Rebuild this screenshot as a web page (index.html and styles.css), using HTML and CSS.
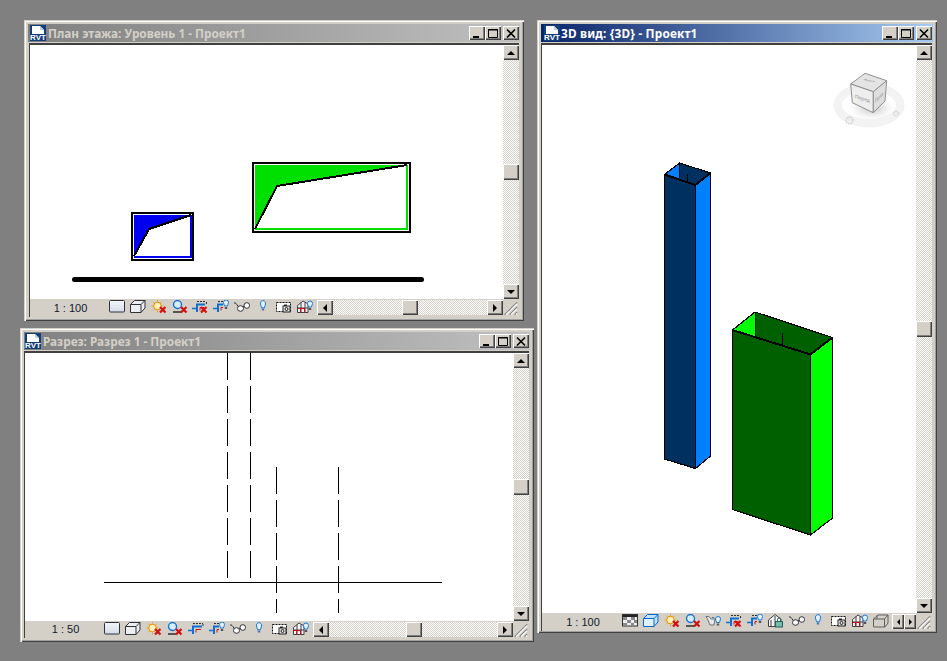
FILE: index.html
```html
<!DOCTYPE html>
<html lang="ru">
<head>
<meta charset="utf-8">
<title>Revit</title>
<link rel="stylesheet" href="styles.css">
</head>
<body>
<svg class="defs" width="0" height="0" aria-hidden="true">
  <defs>
    <linearGradient id="grad-rect" x1="0" y1="0" x2="0" y2="1"><stop offset="0" stop-color="#f4f6fb"/><stop offset="1" stop-color="#d5dce8"/></linearGradient>
    <radialGradient id="grad-shadow"><stop offset="0" stop-color="#bcbcbc"/><stop offset="1" stop-color="#f0f0f0" stop-opacity="0"/></radialGradient>
    <symbol id="rvt" viewBox="0 0 16 16">
      <rect width="16" height="16" fill="#123f7c"/>
      <path d="M2 1h8l4 4v4H2z" fill="#fff"/>
      <path d="M10 1l4 4h-4z" fill="#bcd0e8"/>
      <text x="8" y="15.400" class="rvt-text">RVT</text>
    </symbol>
    <symbol id="g-min" viewBox="0 0 16 13"><rect x="4" y="9" width="6" height="2" fill="#000"/></symbol>
    <symbol id="g-max" viewBox="0 0 16 13"><path d="M3.500 2.500h9v8h-9zM3 3h10" fill="none" stroke="#000"/></symbol>
    <symbol id="g-close" viewBox="0 0 16 13"><path d="M4 2.500l8 8M12 2.500l-8 8" stroke="#000" stroke-width="1.600" fill="none"/></symbol>
    <symbol id="grip" viewBox="0 0 12 13">
      <path d="M1 12L11 2M5 12l6-6M9 12l2-2" stroke="#808080" stroke-width="1.200" fill="none"/>
      <path d="M2 12L11 3M6 12l5-5M10 12l1-1" stroke="#fff" fill="none"/>
    </symbol>
    <symbol id="x-mark" viewBox="0 0 16 14"><path d="M9 7l5.500 5.500M14.500 7L9 12.500" stroke="#d01010" stroke-width="2.200" fill="none"/></symbol>
    <symbol id="bulb" viewBox="0 0 16 14"><path d="M5.500 4a2.600 2.600 0 1 1 5 0c0 1.600-.9 2.200-1.100 3.800H6.600C6.400 6.200 5.500 5.600 5.500 4z" fill="#e6f2ff" stroke="#1878d8"/><rect x="6.800" y="8.500" width="2.400" height="2" fill="#4a78a8"/></symbol>
    <symbol id="i-rect" viewBox="0 0 16 14"><rect x=".5" y=".5" width="15" height="11.500" rx="1" fill="url(#grad-rect)" stroke="#303038"/></symbol>
    <symbol id="i-check" viewBox="0 0 16 14">
      <rect x=".5" y=".5" width="15" height="11.500" fill="#eee" stroke="#303038"/>
      <rect x="1" y="1" width="14" height="2" fill="#222"/>
      <path d="M1 3h4v3H1zM9 3h4v3H9zM5 6h4v3H5zM12 6h3v3h-3zM1 9h4v3H1zM9 9h3v3H9z" fill="#8a8a8a"/>
    </symbol>
    <symbol id="i-cube" viewBox="0 0 16 14"><path d="M.5 4.500L4.500.5h10.500v7.500L11 12.500H.5zM.5 4.500H11v8M11 4.500L15 .5" fill="#eceef2" stroke="#303038"/></symbol>
    <symbol id="i-cube-blue" viewBox="0 0 16 14"><path d="M.5 4.500L4.500.5h10.500v7.500L11 12.500H.5z" fill="#bfe2ff" stroke="#0a66c8"/><path d="M1 5h10v7H1z" fill="#dff1ff"/><path d="M.5 4.500H11v8M11 4.500L15 .5" fill="none" stroke="#0a66c8"/></symbol>
    <symbol id="i-sun" viewBox="0 0 16 14">
      <circle cx="6.500" cy="6" r="3.800" fill="#fff3b8" stroke="#e88a00"/>
      <path d="M6.500 0v1.500M6.500 10.500V12.500M.5 6h1.500M11 6h1.500M2.200 1.700l1.100 1.100M10.800 1.700L9.700 2.800M2.200 10.300l1.100-1.100" stroke="#e8a020" fill="none"/>
      <use href="#x-mark" width="16" height="14"/>
    </symbol>
    <symbol id="i-lens" viewBox="0 0 16 14">
      <circle cx="5.500" cy="4.500" r="4" fill="#d8ecff" stroke="#1070d0" stroke-width="1.300"/>
      <rect x="1" y="11" width="8" height="2" fill="#555"/>
      <use href="#x-mark" width="16" height="14"/>
    </symbol>
    <symbol id="i-crop" viewBox="0 0 16 14">
      <path d="M5 12V4.500H13" stroke="#1070d0" stroke-width="2" fill="none"/>
      <path d="M0 8.500h4" stroke="#1070d0" stroke-width="1.500" fill="none"/>
      <path d="M5 1.500h9M14.500 2v3" stroke="#303038" stroke-dasharray="2 1" fill="none"/>
      <path d="M8 7.500h4M8 7.500v3" stroke="#d01010" fill="none"/>
      <use href="#x-mark" width="16" height="14"/>
    </symbol>
    <symbol id="i-crop2" viewBox="0 0 16 14">
      <path d="M5 12V4.500H10" stroke="#1070d0" stroke-width="2" fill="none"/>
      <path d="M0 8.500h4" stroke="#1070d0" stroke-width="1.500" fill="none"/>
      <path d="M5 1.500h5" stroke="#303038" stroke-dasharray="2 1" fill="none"/>
      <path d="M8 7.500h2M8 7.500v3" stroke="#d01010" fill="none"/>
      <path d="M10.500 2.500a2.500 2.500 0 1 1 5 0c0 1.500-.9 2-1.100 3.500h-2.800c-.2-1.500-1.100-2-1.100-3.500z" fill="#e6f2ff" stroke="#1878d8"/>
      <rect x="11.800" y="7" width="2.400" height="2" fill="#555"/>
    </symbol>
    <symbol id="i-crop3" viewBox="0 0 16 14">
      <path d="M5 12V4.500H14" stroke="#1070d0" stroke-width="2" fill="none"/>
      <path d="M0 8.500h4" stroke="#1070d0" stroke-width="1.500" fill="none"/>
      <path d="M5 1.500h10M15 2v3" stroke="#303038" stroke-dasharray="2 1" fill="none"/>
      <path d="M8 7.500h5M8 7.500v3" stroke="#d01010" fill="none"/>
    </symbol>
    <symbol id="i-glasses" viewBox="0 0 16 14">
      <ellipse cx="6.500" cy="8.500" rx="3" ry="2.800" fill="#fff" stroke="#303038"/>
      <ellipse cx="12.800" cy="5.500" rx="2.800" ry="2.800" fill="#fff" stroke="#303038"/>
      <path d="M0 3c1.500-.5 2.500.5 4 3.500M9 7l1.500-.8" fill="none" stroke="#303038"/>
    </symbol>
    <symbol id="i-camera" viewBox="0 0 16 14">
      <path d="M.5 2.500h14v9H.5z" fill="#fff" stroke="#111" stroke-dasharray="2 1"/>
      <rect x="7" y="6" width="7" height="6" fill="#e8e8e8" stroke="#222"/>
      <circle cx="10.500" cy="9" r="1.500" fill="none" stroke="#222"/>
      <rect x="8" y="4.500" width="3" height="1.500" fill="#222"/>
    </symbol>
    <symbol id="i-house" viewBox="0 0 16 14">
      <path d="M.5 5.500L6 1l5 3v8.500H.5z" fill="#f4f4f4" stroke="#404048"/>
      <path d="M4 2.500v10M8 2.500v10M.5 8h10.500" stroke="#404048" fill="none"/>
      <path d="M.5 8.500h7M3.500 8v4.500M7.500 8v4.500" stroke="#d01010" fill="none"/>
      <path d="M10.500 3.500a2.500 2.500 0 1 1 5 0c0 1.500-.9 2-1.100 3.500h-2.800c-.2-1.500-1.100-2-1.100-3.500z" fill="#e6f2ff" stroke="#1878d8"/>
      <rect x="11.800" y="8" width="2.400" height="2" fill="#555"/>
    </symbol>
    <symbol id="i-pot" viewBox="0 0 16 14">
      <path d="M1 2.500h3L6 5h4l-1 6H5C4 9 3 5 1 2.500zM7 3.500h2" fill="#e8e8ea" stroke="#707078"/>
      <path d="M10.500 5a2.500 2.500 0 1 1 5 0c0 1.500-.9 2-1.100 3.500h-2.800c-.2-1.500-1.100-2-1.100-3.500z" fill="#e6f2ff" stroke="#1878d8"/>
      <rect x="11.800" y="9.500" width="2.400" height="2" fill="#555"/>
    </symbol>
    <symbol id="i-lock" viewBox="0 0 16 14">
      <path d="M.5 6L7 .5 13 5v7.500H.5z" fill="#f4f4f4" stroke="#404048"/>
      <path d="M3 6v6.500M7 2v10" stroke="#404048" fill="none"/>
      <rect x="7.500" y="7.500" width="7" height="5.500" fill="#7bb8b0" stroke="#206860"/>
      <path d="M9.500 7.500v-2a1.500 1.500 0 0 1 3 0v2" fill="none" stroke="#206860"/>
    </symbol>
    <symbol id="i-box" viewBox="0 0 16 14"><path d="M.5 5L5 1h10v8l-3 4H.5zM.5 5H11.500v8M11.500 5L15 1M4 5V1.500" fill="#d4d0c8" stroke="#606060"/></symbol>
  </defs>
</svg>

<main class="desktop">

  <section class="window win-plan">
    <header class="titlebar">
      <svg class="app-icon"><use href="#rvt"/></svg>
      <h1 class="title">План этажа: Уровень 1 - Проект1</h1>
      <div class="caption-buttons">
        <button class="cap"><svg><use href="#g-min"/></svg></button><button class="cap"><svg><use href="#g-max"/></svg></button><button class="cap cap-close"><svg><use href="#g-close"/></svg></button>
      </div>
    </header>
    <div class="client">
      <div class="main-row">
        <svg class="canvas" viewBox="30 45 473 254" width="473" height="254">
          <rect x="253" y="163" width="156.500" height="68.500" class="outline"/>
          <path d="M255 165H407L277 186 255 229z" fill="#00e000" class="pix"/>
          <path d="M255 229H406.500V165" fill="none" stroke="#00e000" stroke-width="2" class="pix"/>
          <path d="M255 229L277 186 407 165" class="edge"/>
          <rect x="132" y="213" width="61" height="46.500" class="outline"/>
          <path d="M134 215H191L149 229 134 256z" fill="#0000f0" class="pix"/>
          <path d="M134 256.800H190.500V215" fill="none" stroke="#0000f0" stroke-width="2" class="pix"/>
          <path d="M134 256L149 229 191 215" class="edge"/>
          <path d="M74.500 279.500H421.500" stroke="#000" stroke-width="5" stroke-linecap="round"/>
        </svg>
        <div class="vscroll">
          <button class="sb"><i class="arr up"></i></button>
          <div class="track track-v thumb-plan"><span class="thumb"></span></div>
          <button class="sb"><i class="arr down"></i></button>
        </div>
      </div>
      <div class="status">
        <span class="scale">1 : 100</span>
        <div class="tools">
          <svg class="ti"><use href="#i-rect"/></svg>
          <svg class="ti"><use href="#i-cube"/></svg>
          <svg class="ti"><use href="#i-sun"/></svg>
          <svg class="ti"><use href="#i-lens"/></svg>
          <svg class="ti nudge"><use href="#i-crop"/></svg>
          <svg class="ti"><use href="#i-crop2"/></svg>
          <svg class="ti"><use href="#i-glasses"/></svg>
          <svg class="ti"><use href="#bulb"/></svg>
          <svg class="ti"><use href="#i-camera"/></svg>
          <svg class="ti"><use href="#i-house"/></svg>
        </div>
        <div class="hscroll">
          <button class="sb sb-h"><i class="arr left"></i></button>
          <div class="track track-h thumb-h-plan"><span class="thumb"></span></div>
          <button class="sb sb-h"><i class="arr right"></i></button>
        </div>
        <svg class="grip"><use href="#grip"/></svg>
      </div>
    </div>
  </section>

  <section class="window win-section">
    <header class="titlebar">
      <svg class="app-icon"><use href="#rvt"/></svg>
      <h1 class="title">Разрез: Разрез 1 - Проект1</h1>
      <div class="caption-buttons">
        <button class="cap"><svg><use href="#g-min"/></svg></button><button class="cap"><svg><use href="#g-max"/></svg></button><button class="cap cap-close"><svg><use href="#g-close"/></svg></button>
      </div>
    </header>
    <div class="client">
      <div class="main-row">
        <svg class="canvas" viewBox="25 353 488 268" width="488" height="268">
          <path d="M104 582.500H442" class="thin"/>
          <path d="M227.500 353V582M250.500 353V582" class="dashed"/>
          <path d="M276.500 467V613M338.500 467V613" class="dashed"/>
        </svg>
        <div class="vscroll">
          <button class="sb"><i class="arr up"></i></button>
          <div class="track track-v thumb-section"><span class="thumb"></span></div>
          <button class="sb"><i class="arr down"></i></button>
        </div>
      </div>
      <div class="status">
        <span class="scale">1 : 50</span>
        <div class="tools">
          <svg class="ti"><use href="#i-rect"/></svg>
          <svg class="ti"><use href="#i-cube"/></svg>
          <svg class="ti"><use href="#i-sun"/></svg>
          <svg class="ti"><use href="#i-lens"/></svg>
          <svg class="ti"><use href="#i-crop3"/></svg>
          <svg class="ti"><use href="#i-crop2"/></svg>
          <svg class="ti"><use href="#i-glasses"/></svg>
          <svg class="ti"><use href="#bulb"/></svg>
          <svg class="ti"><use href="#i-camera"/></svg>
          <svg class="ti"><use href="#i-house"/></svg>
        </div>
        <div class="hscroll">
          <button class="sb sb-h"><i class="arr left"></i></button>
          <div class="track track-h thumb-h-section"><span class="thumb"></span></div>
          <button class="sb sb-h"><i class="arr right"></i></button>
        </div>
        <svg class="grip"><use href="#grip"/></svg>
      </div>
    </div>
  </section>

  <section class="window win-3d">
    <header class="titlebar active">
      <svg class="app-icon"><use href="#rvt"/></svg>
      <h1 class="title">3D вид: {3D} - Проект1</h1>
      <div class="caption-buttons">
        <button class="cap"><svg><use href="#g-min"/></svg></button><button class="cap"><svg><use href="#g-max"/></svg></button><button class="cap cap-close"><svg><use href="#g-close"/></svg></button>
      </div>
    </header>
    <div class="client">
      <div class="main-row">
        <svg class="canvas" viewBox="542 45 374 568" width="374" height="568">
          <!-- blue column -->
          <path d="M664.500 174.500L679.500 163 710.500 173 695.500 185z" fill="#00305f" class="pix"/>
          <path d="M664.500 174.500L679.500 163V178z" fill="#0080ff" class="pix"/>
          <path d="M664.500 174.500V459L695.500 468.500V185z" fill="#00305f" class="solid"/>
          <path d="M695.500 185V468.500L710.500 456V173z" fill="#0080ff" class="solid"/>
          <path d="M664.500 174.500L695.500 185 710.500 173" fill="none" class="rim"/>
          <path d="M664.500 174.500L679.500 163 710.500 173" fill="none" class="solid"/>
          <path d="M679.500 163V178M687.500 174V182" class="solid"/>
          <!-- green column -->
          <path d="M732.500 330L755 312 832.500 337.500 810.500 354.500z" fill="#006000" class="pix"/>
          <path d="M732.500 330L755 312V337z" fill="#00ff00" class="pix"/>
          <path d="M732.500 330V509.500L810.500 535V354.500z" fill="#006000" class="solid"/>
          <path d="M810.500 354.500V535L832.500 518V337.500z" fill="#00ff00" class="solid"/>
          <path d="M732.500 330L810.500 354.500 832.500 337.500" fill="none" class="rim"/>
          <path d="M732.500 330L755 312 832.500 337.500" fill="none" class="solid"/>
          <path d="M755.500 312V337M782.500 333V345" class="solid"/>
          <!-- view cube -->
          <ellipse cx="869" cy="105" rx="31" ry="18" fill="none" stroke="#f3f3f3" stroke-width="8"/>
          <ellipse cx="869" cy="105" rx="35" ry="22" fill="none" stroke="#ececec" stroke-width=".6"/>
          <ellipse cx="872" cy="108" rx="24" ry="13" fill="url(#grad-shadow)"/>
          <circle cx="849.500" cy="120.500" r="3.500" fill="#eee" stroke="#b0b0b0" stroke-dasharray="1 1"/>
          <circle cx="896" cy="113.500" r="2.500" fill="#eee" stroke="#c0c0c0" stroke-dasharray="1 1"/>
          <path d="M850.700 84L865 73.300 886.700 80.700 873.300 91.700z" fill="#e4e4e4" class="cube-edge"/>
          <path d="M850.700 84L873.300 91.700V112.700L852.300 102.700z" fill="#eeeeee" class="cube-edge"/>
          <path d="M873.300 91.700L886.700 80.700 885 101 873.300 112.700z" fill="#dedede" class="cube-edge"/>
          <text class="cube-label" transform="matrix(1 .2 -.5 .4 863 80)">Верх</text>
          <text class="cube-label" transform="matrix(1 .3 0 1 855 98)">Перед</text>
          <text class="cube-label" transform="matrix(.7 -.7 0 1 875 103)">Прав</text>
        </svg>
        <div class="vscroll">
          <button class="sb"><i class="arr up"></i></button>
          <div class="track track-v thumb-3d"><span class="thumb"></span></div>
          <button class="sb"><i class="arr down"></i></button>
        </div>
      </div>
      <div class="status">
        <span class="scale scale-3d">1 : 100</span>
        <div class="tools">
          <svg class="ti"><use href="#i-check"/></svg>
          <svg class="ti"><use href="#i-cube-blue"/></svg>
          <svg class="ti"><use href="#i-sun"/></svg>
          <svg class="ti"><use href="#i-lens"/></svg>
          <svg class="ti nudge"><use href="#i-pot"/></svg>
          <svg class="ti"><use href="#i-crop"/></svg>
          <svg class="ti"><use href="#i-crop2"/></svg>
          <svg class="ti"><use href="#i-lock"/></svg>
          <svg class="ti"><use href="#i-glasses"/></svg>
          <svg class="ti"><use href="#bulb"/></svg>
          <svg class="ti"><use href="#i-camera"/></svg>
          <svg class="ti"><use href="#i-house"/></svg>
          <svg class="ti"><use href="#i-box"/></svg>
        </div>
        <div class="hscroll hs-3d">
          <button class="sb sb-h sb-narrow"><i class="arr left small"></i></button>
          <button class="sb sb-h sb-narrow"><i class="arr right small"></i></button>
        </div>
        <svg class="grip"><use href="#grip"/></svg>
      </div>
    </div>
  </section>

</main>
</body>
</html>
```

FILE: styles.css
```css
* { box-sizing: border-box; }
html, body { margin: 0; height: 100%; }
body { background: #808080; overflow: hidden; }
.defs { position: absolute; }
.rvt-text { font: bold 8px "Liberation Sans", sans-serif; fill: #fff; text-anchor: middle; }

.desktop { position: relative; width: 947px; height: 661px; }

.window {
  position: absolute;
  display: flex;
  flex-direction: column;
  padding: 4px;
  background: #d4d0c8;
  box-shadow: inset 1px 1px #d4d0c8, inset 2px 2px #fff, inset -1px -1px #404040, inset -2px -2px #a0a0a0;
}
.win-plan { left: 24px; top: 20px; width: 500px; height: 301px; }
.win-section { left: 20px; top: 328px; width: 514px; height: 314px; }
.win-3d { left: 537px; top: 20px; width: 400px; height: 613px; padding-bottom: 2px; }

.titlebar {
  flex: none;
  display: flex;
  align-items: center;
  height: 18px;
  padding: 0 1px 0 2px;
  background: linear-gradient(90deg, #808080, #c0c0c0);
  color: #d4d0c8;
}
.titlebar.active { background: linear-gradient(90deg, #0a246a, #a6caf0); color: #fff; }
.win-section .titlebar { padding-left: 1px; }
.win-3d .titlebar { padding-left: 3px; }
.app-icon { width: 16px; height: 16px; flex: none; }
.title {
  flex: 1;
  margin: 0 0 0 2px;
  font: bold 11.800px "Noto Sans", sans-serif;
  white-space: nowrap;
}
.win-3d .title { margin-left: 1px; letter-spacing: .18px; }
.caption-buttons { display: flex; flex: none; }
.cap, .sb {
  display: block;
  padding: 0;
  border: 0;
  background: #d4d0c8;
  box-shadow: inset 1px 1px #fff, inset -1px -1px #404040, inset -2px -2px #808080;
}
.cap { width: 16px; height: 14px; }
.cap svg { display: block; width: 16px; height: 13px; }
.cap-close { margin-left: 2px; }

.client {
  flex: 1;
  min-height: 0;
  display: flex;
  flex-direction: column;
  margin: 1px 1px 0 1px;
  border-left: 1px solid #404040;
  border-top: 2px solid #404040;
}
.win-section .client, .win-3d .client { margin-left: 0; }
.main-row { flex: 1; min-height: 0; display: flex; }
.canvas { flex: 1; display: block; background: #fff; min-width: 0; }
.vscroll { flex: none; width: 16px; display: flex; flex-direction: column; }
.vscroll .sb { width: 16px; height: 15px; flex: none; }
.track {
  background: repeating-conic-gradient(#d4d0c8 0 25%, #fff 0 50%) 0 0 / 2px 2px;
}
.track-v { flex: 1; }
.track-h { flex: 1; display: flex; }
.thumb {
  display: block;
  width: 16px;
  height: 16px;
  background: #d4d0c8;
  box-shadow: inset 1px 1px #fff, inset -1px -1px #404040, inset -2px -2px #808080;
}
.track-h .thumb { height: 15px; }
.thumb-plan { padding-top: 104px; }
.thumb-section { padding-top: 111px; }
.thumb-3d { padding-top: 261px; }
.thumb-h-plan { padding-left: 69px; }
.thumb-h-section { padding-left: 77px; }

.arr { display: block; width: 0; height: 0; margin: auto; border: 4px solid transparent; }
.arr.up { border-top-width: 0; border-bottom-color: #000; }
.arr.down { border-bottom-width: 0; border-top-color: #000; }
.arr.left { border-left-width: 0; border-right-color: #000; }
.arr.right { border-right-width: 0; border-left-color: #000; }
.arr.small { border-width: 3px; }
.arr.left.small { border-left-width: 0; }
.arr.right.small { border-right-width: 0; }

.status { flex: none; display: flex; align-items: flex-start; height: 18px; background: #d4d0c8; }
.win-section .status { height: 17px; }
.scale {
  flex: none;
  width: 79px;
  padding-left: 2px;
  font: 11px/18px "Liberation Sans", sans-serif;
  color: #101828;
  text-align: center;
  white-space: nowrap;
}
.win-section .scale { line-height: 17px; }
.scale-3d { width: 80px; }

.tools { flex: none; display: flex; gap: 5px; padding-top: 1px; }
.ti { display: block; width: 16px; height: 14px; flex: none; }
.nudge { margin-left: -1px; }

.hscroll { flex: 1; display: flex; margin-top: 1px; margin-left: 4px; min-width: 0; }
.sb-h { flex: none; width: 16px; height: 15px; }
.sb-narrow { width: 12px; }
.hs-3d { justify-content: flex-end; }
.grip { flex: none; width: 16px; height: 16px; margin-top: 1px; }

.outline { fill: #fff; stroke: #000; stroke-width: 2; shape-rendering: crispEdges; }
.pix { shape-rendering: crispEdges; }
.edge { fill: none; stroke: #000; stroke-width: 2; stroke-linejoin: round; shape-rendering: crispEdges; }
.thin { fill: none; stroke: #000; stroke-width: 1; shape-rendering: crispEdges; }
.dashed { fill: none; stroke: #000; stroke-width: 1; stroke-dasharray: 27 6; shape-rendering: crispEdges; }
.solid { stroke: #000; stroke-width: 1.200; stroke-linejoin: round; shape-rendering: crispEdges; }
.rim { stroke: #000; stroke-width: 2; stroke-linejoin: round; shape-rendering: crispEdges; }
.cube-edge { stroke: #909090; stroke-width: 1; }
.cube-label { font: 5px "Liberation Sans", sans-serif; fill: #8a8a8a; }
```
